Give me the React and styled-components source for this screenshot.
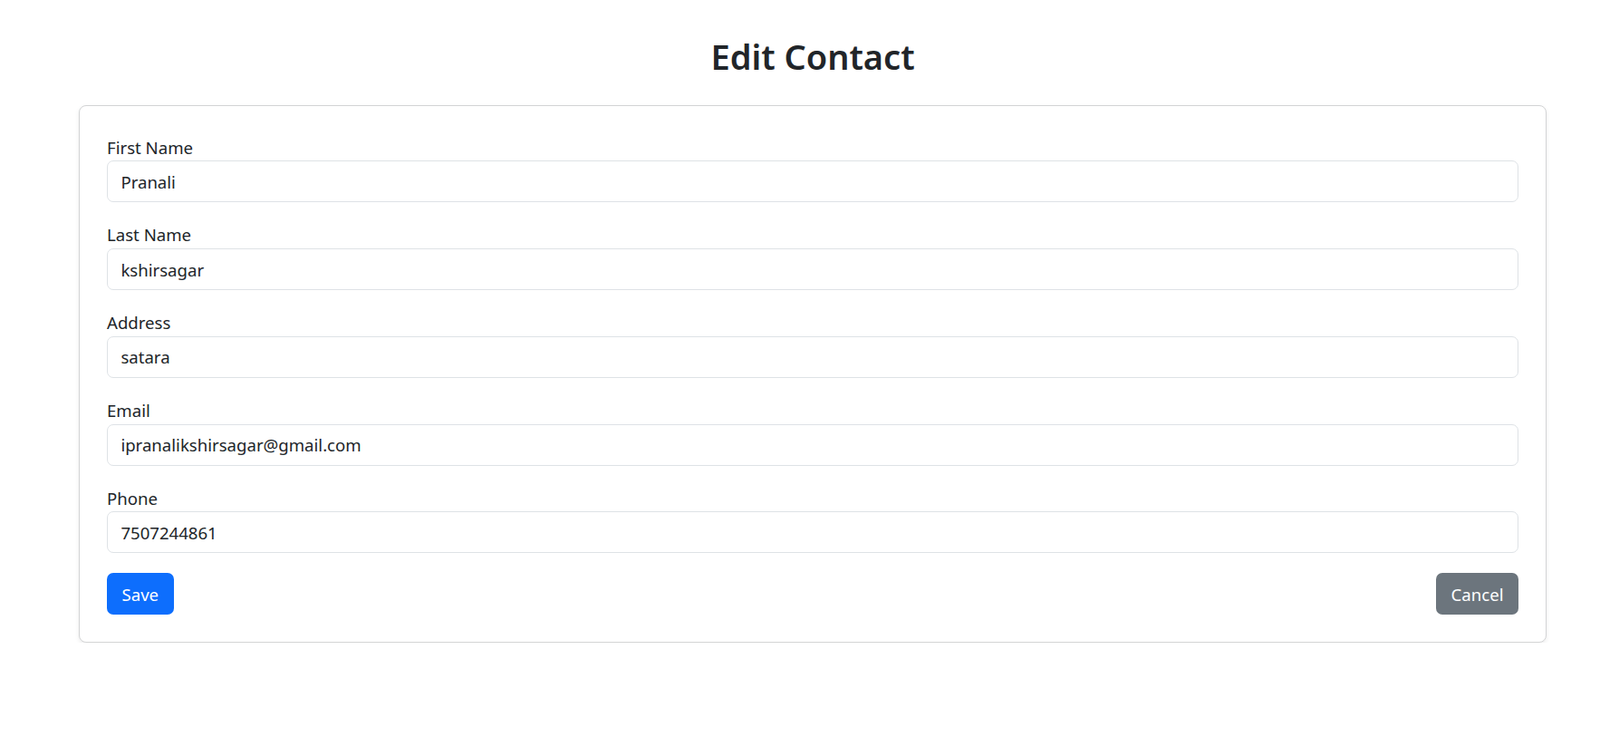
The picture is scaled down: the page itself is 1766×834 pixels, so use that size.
import React, { useState } from "react";
import styled, { createGlobalStyle } from "styled-components";

const GlobalStyle = createGlobalStyle`
  body {
    margin: 0;
    background: #fff;
    color: #212529;
    font-family: "Noto Sans", "Open Sans", sans-serif;
  }
  * { box-sizing: border-box; }
`;

const fields = [
  { name: "firstName", label: "First Name", value: "Pranali" },
  { name: "lastName", label: "Last Name", value: "kshirsagar" },
  { name: "address", label: "Address", value: "satara" },
  { name: "email", label: "Email", value: "ipranalikshirsagar@gmail.com" },
  { name: "phone", label: "Phone", value: "7507244861" },
];

export default function App() {
  const [contact, setContact] = useState(
    Object.fromEntries(fields.map((f) => [f.name, f.value]))
  );

  const handleChange = (e) =>
    setContact({ ...contact, [e.target.name]: e.target.value });

  return (
    <>
      <GlobalStyle />
      <Page>
        <Title>Edit Contact</Title>
        <Card>
          {fields.map((f) => (
            <Field key={f.name}>
              <Label htmlFor={f.name}>{f.label}</Label>
              <Input
                id={f.name}
                name={f.name}
                value={contact[f.name]}
                onChange={handleChange}
              />
            </Field>
          ))}
          <Actions>
            <Button type="button">Save</Button>
            <Button type="button" $variant="secondary">
              Cancel
            </Button>
          </Actions>
        </Card>
      </Page>
    </>
  );
}

const Page = styled.div`
  width: 1620px;
  margin-left: 87px;
  padding-top: 39px;
`;

const Title = styled.h2`
  margin: 0 0 30px;
  text-align: center;
  font-size: 38px;
  line-height: 47px;
  font-weight: 600;
  color: #212529;
`;

const Card = styled.div`
  border: 1px solid #d3d4d5;
  border-radius: 8px;
  padding: 31.5px 30px 29.5px;
  background: #fff;
  box-shadow: 0 2px 5px rgba(0, 0, 0, 0.08);
`;

const Field = styled.div`
  margin-bottom: 22px;
`;

const Label = styled.label`
  display: block;
  font-size: 18.6px;
  line-height: 28.8px;
`;

const Input = styled.input`
  display: block;
  width: 100%;
  height: 46px;
  padding: 0 14.4px;
  border: 1px solid #dee2e6;
  border-radius: 7px;
  font-family: inherit;
  font-size: 18.6px;
  line-height: 28.8px;
  color: #212529;
  background: #fff;
  outline: none;
`;

const Actions = styled.div`
  display: flex;
  justify-content: space-between;
  align-items: center;
`;

const Button = styled.button`
  height: 46px;
  padding: 0 16.5px;
  border: none;
  border-radius: 7px;
  font-family: inherit;
  font-size: 18.6px;
  color: #fff;
  background: ${(p) => (p.$variant === "secondary" ? "#6c757d" : "#0d6efd")};
  cursor: pointer;
`;
